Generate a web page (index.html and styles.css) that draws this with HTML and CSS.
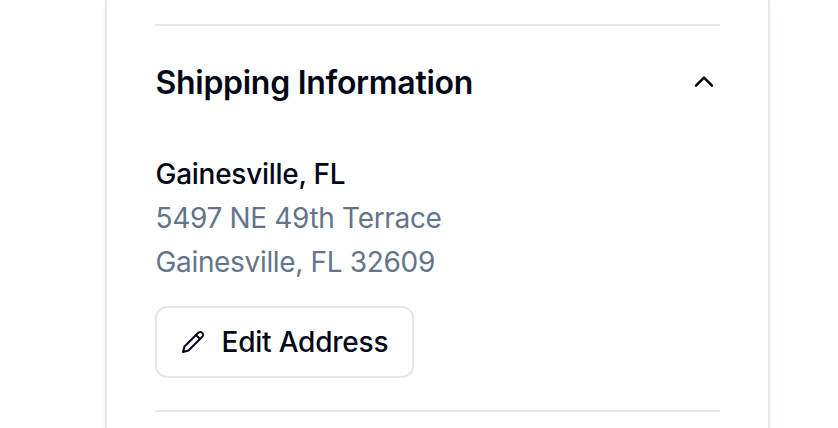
FILE: index.html
```html
<!DOCTYPE html>
<html lang="en">
<head>
    <meta charset="UTF-8">
    <meta name="viewport" content="width=device-width, initial-scale=1.0">
    <title>Shipping Information</title>
    <link rel="stylesheet" href="styles.css">
</head>
<body>

<div class="card">
    <section class="panel">
        <div class="panel-header">
            <h2>Shipping Information</h2>
            <svg class="chevron" viewBox="0 0 24 24"><path d="m18 14.7-6-6-6 6"/></svg>
        </div>
        <div class="address">
            <p class="address-name">Gainesville, FL</p>
            <p>5497 NE 49th Terrace</p>
            <p>Gainesville, FL 32609</p>
        </div>
        <button class="edit-button" type="button">
            <svg class="pencil" viewBox="0 0 24 24">
                <path d="M17 3a2.85 2.83 0 1 1 4 4L7.5 20.5 2 22l1.5-5.5Z"/>
                <path d="m15 5 4 4"/>
            </svg>
            Edit Address
        </button>
    </section>
</div>

</body>
</html>
```

FILE: styles.css
```css
body {
    margin: 0;
    background: #fff;
    color: #020817;
    font-family: Inter, sans-serif;
    overflow: hidden;
}
.card {
    box-sizing: border-box;
    width: 665px;
    height: 428px;
    margin-left: 105px;
    padding: 24px 48px 0;
    border: solid #e2e8f0;
    border-width: 0 2px;
    box-shadow: 0 2px 4px rgba(0, 0, 0, 0.05);
}
.panel {
    box-sizing: border-box;
    height: 388px;
    border: solid #e2e8f0;
    border-width: 2px 0;
}
.panel-header {
    display: flex;
    justify-content: space-between;
    align-items: center;
    height: 112px;
}
h2 {
    margin: 0;
    padding-left: 0.5px;
    font-size: 32px;
    font-weight: 600;
    letter-spacing: -0.29px;
}
.chevron {
    width: 32px;
    height: 32px;
}
.chevron,
.pencil {
    fill: none;
    stroke: currentColor;
    stroke-width: 2;
    stroke-linecap: round;
    stroke-linejoin: round;
}
.address {
    padding-top: 14px;
    font-size: 28px;
    line-height: 44px;
    color: #64748b;
    letter-spacing: -0.33px;
}
.address p {
    margin: 0;
    padding-left: 0.5px;
}
.address .address-name {
    color: #020817;
    font-weight: 500;
    letter-spacing: -0.27px;
}
.edit-button {
    display: flex;
    align-items: center;
    box-sizing: border-box;
    width: 259px;
    height: 72px;
    margin-top: 22px;
    padding: 0 24px;
    gap: 16.5px;
    border: 2px solid #e2e8f0;
    border-radius: 12px;
    background: #fff;
    color: #020817;
    font-family: inherit;
    font-size: 28px;
    font-weight: 500;
    letter-spacing: -0.22px;
    white-space: nowrap;
}
.pencil {
    flex-shrink: 0;
    width: 24px;
    height: 24px;
}
```
